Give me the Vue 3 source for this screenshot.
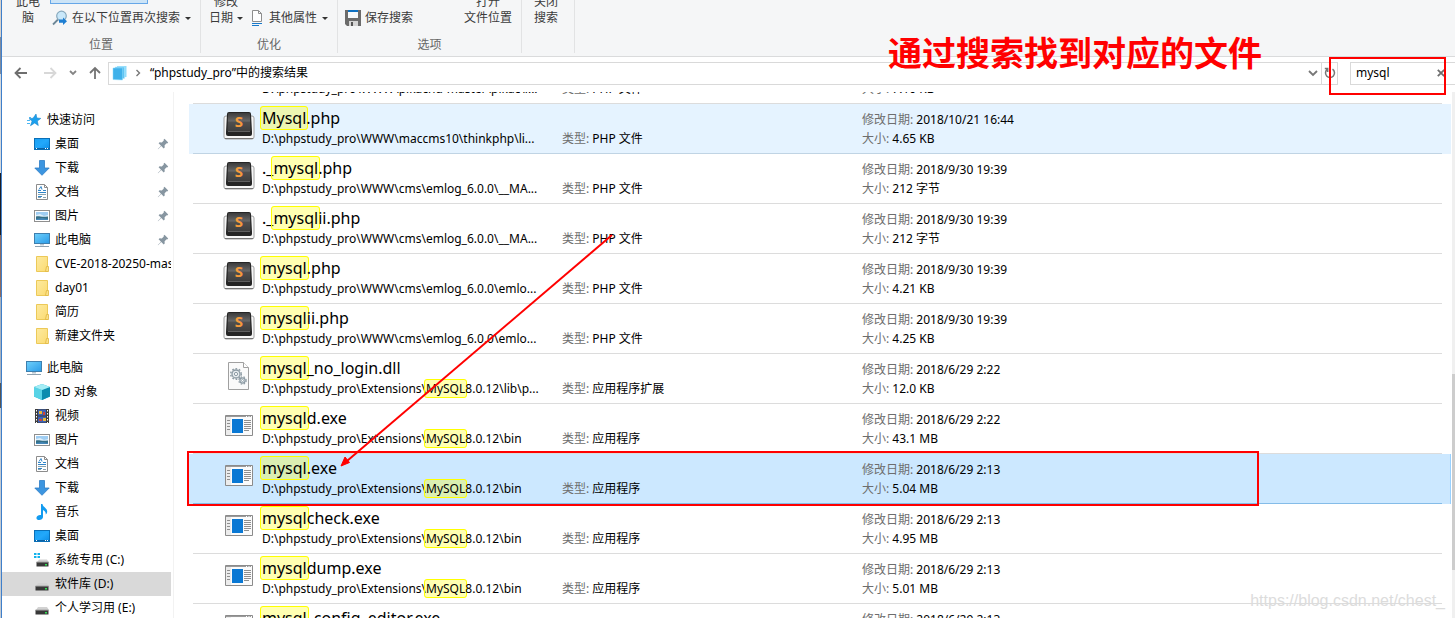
<script setup>
import { ref } from 'vue'

const query = ref('mysql')

const quick = [
  { icon: 'desktop', name: '桌面', pin: true },
  { icon: 'download', name: '下载', pin: true },
  { icon: 'doc', name: '文档', pin: true },
  { icon: 'picture', name: '图片', pin: true },
  { icon: 'pc', name: '此电脑', pin: true },
  { icon: 'folder', name: 'CVE-2018-20250-master' },
  { icon: 'folder', name: 'day01' },
  { icon: 'folder', name: '简历' },
  { icon: 'folder', name: '新建文件夹' },
]
const devices = [
  { icon: 'cube', name: '3D 对象' },
  { icon: 'video', name: '视频' },
  { icon: 'picture', name: '图片' },
  { icon: 'doc', name: '文档' },
  { icon: 'download', name: '下载' },
  { icon: 'music', name: '音乐' },
  { icon: 'desktop', name: '桌面' },
  { icon: 'sysdrive', name: '系统专用 (C:)' },
  { icon: 'drive', name: '软件库 (D:)', active: true },
  { icon: 'drive', name: '个人学习用 (E:)' },
]
const trees = [
  { icon: 'star', name: '快速访问', items: quick },
  { icon: 'pc', name: '此电脑', items: devices },
]

const bin = 'D:\\phpstudy_pro\\Extensions\\MySQL8.0.12\\bin'
const files = [
  { icon: 'sublime', name: 'mysql.php', path: 'D:\\phpstudy_pro\\WWW\\pikachu-master\\pikac\\l...', type: 'PHP 文件', date: '2018/11/2 10:12', size: '7.10 KB' },
  { icon: 'sublime', name: 'Mysql.php', path: 'D:\\phpstudy_pro\\WWW\\maccms10\\thinkphp\\li...', type: 'PHP 文件', date: '2018/10/21 16:44', size: '4.65 KB', state: 'hover' },
  { icon: 'sublime', name: '._mysql.php', path: 'D:\\phpstudy_pro\\WWW\\cms\\emlog_6.0.0\\__MA...', type: 'PHP 文件', date: '2018/9/30 19:39', size: '212 字节' },
  { icon: 'sublime', name: '._mysqlii.php', path: 'D:\\phpstudy_pro\\WWW\\cms\\emlog_6.0.0\\__MA...', type: 'PHP 文件', date: '2018/9/30 19:39', size: '212 字节' },
  { icon: 'sublime', name: 'mysql.php', path: 'D:\\phpstudy_pro\\WWW\\cms\\emlog_6.0.0\\emlo...', type: 'PHP 文件', date: '2018/9/30 19:39', size: '4.21 KB' },
  { icon: 'sublime', name: 'mysqlii.php', path: 'D:\\phpstudy_pro\\WWW\\cms\\emlog_6.0.0\\emlo...', type: 'PHP 文件', date: '2018/9/30 19:39', size: '4.25 KB' },
  { icon: 'dll', name: 'mysql_no_login.dll', path: 'D:\\phpstudy_pro\\Extensions\\MySQL8.0.12\\lib\\p...', type: '应用程序扩展', date: '2018/6/29 2:22', size: '12.0 KB' },
  { icon: 'exe', name: 'mysqld.exe', path: bin, type: '应用程序', date: '2018/6/29 2:22', size: '43.1 MB' },
  { icon: 'exe', name: 'mysql.exe', path: bin, type: '应用程序', date: '2018/6/29 2:13', size: '5.04 MB', state: 'selected' },
  { icon: 'exe', name: 'mysqlcheck.exe', path: bin, type: '应用程序', date: '2018/6/29 2:13', size: '4.95 MB' },
  { icon: 'exe', name: 'mysqldump.exe', path: bin, type: '应用程序', date: '2018/6/29 2:13', size: '5.01 MB' },
  { icon: 'exe', name: 'mysql_config_editor.exe', path: bin, type: '应用程序', date: '2018/6/29 2:13', size: '4.83 MB' },
]

const parts = (s) => s.split(/(mysql)/i).filter(Boolean)
const isHit = (s) => s.toLowerCase() === 'mysql'
</script>

<template>
  <div class="window">
    <svg class="defs" aria-hidden="true">
      <defs>
        <linearGradient id="gBlue" x1="0" y1="0" x2="1" y2="1">
          <stop offset="0" stop-color="#1aa0f2" /><stop offset=".5" stop-color="#22a8fb" /><stop offset="1" stop-color="#0c8ce6" />
        </linearGradient>
        <linearGradient id="gScreen" x1="0" y1="0" x2="1" y2="1">
          <stop offset="0" stop-color="#6fd0fb" /><stop offset="1" stop-color="#2a9be8" />
        </linearGradient>
        <linearGradient id="gFolder" x1="0" y1="0" x2="1" y2="1">
          <stop offset="0" stop-color="#fdeaa0" /><stop offset="1" stop-color="#fbdb72" />
        </linearGradient>
        <linearGradient id="gKey" x1="0" y1="0" x2="0" y2="1">
          <stop offset="0" stop-color="#3c3c3c" /><stop offset=".45" stop-color="#686868" /><stop offset=".5" stop-color="#505050" /><stop offset="1" stop-color="#404040" />
        </linearGradient>
      </defs>
      <symbol id="star" viewBox="0 0 16 16">
        <path d="M10 2l.8 4 4 .4-3.500 2.600 1 4.500-3.600-2.500-4.200 2.700 1.600-4.600-3-2.400 4-.5z" fill="#1ba0ee" stroke="#1583c9" stroke-width=".6" />
        <path d="M1 8.500h3M1 11.500h3M3 5.500h2" stroke="#49b6f3" stroke-width="1" />
      </symbol>
      <symbol id="desktop" viewBox="0 0 16 16">
        <rect x=".5" y="2.500" width="15" height="11" fill="url(#gBlue)" stroke="#0a6fb7" />
        <path d="M1 12.500h14" stroke="#0b62a5" /><path d="M2 12.500h1M11 12.500h1M13 12.500h1" stroke="#fff" />
      </symbol>
      <symbol id="download" viewBox="0 0 16 16">
        <path d="M5.500 .5h5v7.500h4.700L8 15.300.8 8h4.700z" fill="#3c95e0" stroke="#2c7cc5" stroke-width=".8" />
      </symbol>
      <symbol id="doc" viewBox="0 0 16 16">
        <path d="M2.500 .5h8l3 3v12h-11z" fill="#fff" stroke="#8c8c8c" />
        <path d="M10.500 .5v3h3" fill="none" stroke="#8c8c8c" />
        <path d="M4 6.500h3M4 8.500h8M4 12.500h4M9 6.500h3" stroke="#3186c9" /><path d="M4 10.500h8M4 13.500h3M9 13.500h3" stroke="#8aa3ae" /><path d="M5 5.500l2-3 1 3" fill="none" stroke="#3186c9" />
      </symbol>
      <symbol id="picture" viewBox="0 0 16 16">
        <rect x=".5" y="2.500" width="15" height="11" fill="#fff" stroke="#8f8f8f" />
        <path d="M2 4h12v5H2z" fill="#9fcdf2" /><path d="M2 7l4-1 4 2 4-1v2H2z" fill="#dceefa" /><path d="M2 8.500c3-1 5 1 12 0V12H2z" fill="#356f86" /><path d="M2 11l6-1 6 1v1H2z" fill="#4587b8" />
      </symbol>
      <symbol id="pc" viewBox="0 0 16 16">
        <rect x=".5" y="1.500" width="15" height="10" fill="url(#gScreen)" stroke="#3e7fae" />
        <path d="M6 12h4v1.500H6z" fill="#b9c7d0" /><path d="M1 14.500h14" stroke="#8fa2b0" />
      </symbol>
      <symbol id="folder" viewBox="0 0 16 16">
        <path d="M2.500 .5h11v15h-11z" fill="url(#gFolder)" stroke="#ecc958" />
        <path d="M12.500 10.500h2v5h-3z" fill="#fbe18a" stroke="#e0b63f" stroke-width=".8" />
      </symbol>
      <symbol id="cube" viewBox="0 0 16 16">
        <path d="M8 0l8 3v9.500L8 16 0 12.500V3z" fill="#21b2cf" /><path d="M0 3l8 3v10l-8-3.500z" fill="#58d3e6" /><path d="M8 6l8-3v9.500L8 16z" fill="#0a8cae" /><path d="M8 0l8 3-8 3-8-3z" fill="#a4edf5" />
      </symbol>
      <symbol id="video" viewBox="0 0 16 16">
        <path d="M1 1h14v14H1z" fill="#3d3d3d" /><path d="M4 1.500h8v6H4zM4 8.500h8v6H4z" fill="#3c62b8" />
        <path d="M5 3h3v3H5zM9 10h3v3H9z" fill="#e8b839" /><path d="M9 4h2v3H9zM5 11h3v2H5z" fill="#c9463d" />
        <path d="M2.500 2v13M13.500 2v13" stroke="#fff" stroke-dasharray="1.500 1.500" />
      </symbol>
      <symbol id="music" viewBox="0 0 16 16">
        <path d="M7 0h1.500c.3 3 4.700 4 4.700 7.500 0 1.500-.8 2.500-1.500 3 .3-2.500-1-3.500-2.700-4.500V13c0 2-2 3-3.800 3-1.800 0-3-1-2.700-2.600C2.900 11.500 5 10.600 7 11z" fill="#129bf0" />
      </symbol>
      <symbol id="drive" viewBox="0 0 16 16">
        <path d="M4 7h9l2 3H2z" fill="#d2d2d2" /><path d="M1.500 10h13v4.500h-13z" fill="#383838" /><path d="M1.500 9.500h13v1h-13z" fill="#a8a8a8" /><path d="M11 12h2v1.500h-2z" fill="#30e052" />
      </symbol>
      <symbol id="sysdrive" viewBox="0 0 16 16">
        <path d="M5 7.500h8l2 3H3z" fill="#d2d2d2" /><path d="M2.500 10h12v4.500h-12z" fill="#383838" /><path d="M2.500 9.500h12v1h-12z" fill="#a8a8a8" /><path d="M11 12h2v1.500h-2z" fill="#30e052" />
        <path d="M0 1h2.500v2H0zM3.500 1H6v2H3.500zM0 4h2.500v2H0zM3.500 4H6v2H3.500z" fill="#12b2ec" />
      </symbol>
      <symbol id="pin" viewBox="0 0 12 12">
        <path d="M7.500 .8l3.700 3.700-1 .9-.6-.2-2 2 .1 2.200-1 1L4.300 8 1 11.200.8 11 4 7.700 1.600 5.300l1-1 2.200.1 2-2-.2-.6z" fill="#8796a1" />
      </symbol>
      <symbol id="sublime" viewBox="0 0 32 32">
        <path d="M3 6h26q2 0 2 2v19q0 2-2 2H3q-2 0-2-2V8q0-2 2-2z" fill="#f7f7f7" stroke="#a2a2a2" />
        <path d="M2 28.500h28" stroke="#777" />
        <path d="M3 22l1-18q0-2 2-2h20q2 0 2 2l1 18v2q0 2-2 2H5q-2 0-2-2z" fill="#252525" />
        <path d="M5 4q0-1 1-1h20q1 0 1 1l.5 17h-23z" fill="url(#gKey)" />
        <path d="M5 21.500h22" stroke="#7a7a7a" stroke-width=".7" />
        <text x="16" y="17" text-anchor="middle" font-family="Noto Sans, sans-serif" font-size="15" font-weight="700" fill="#f59a3c">S</text>
      </symbol>
      <symbol id="dll" viewBox="0 0 32 32">
        <path d="M5.500 2.500h15l5 5v22h-20z" fill="#fafafa" stroke="#a0a0a0" /><path d="M20.500 2.500v5h5" fill="#fff" stroke="#a0a0a0" />
        <circle cx="13" cy="14" r="4" fill="#e6ebee" stroke="#8c9aa3" stroke-width="1.300" /><circle cx="13" cy="14" r="5.300" fill="none" stroke="#8c9aa3" stroke-width="1.400" stroke-dasharray="1.700 1.700" /><circle cx="13" cy="14" r="1.600" fill="#fff" stroke="#8c9aa3" />
        <circle cx="19.500" cy="20.500" r="2.600" fill="#e6ebee" stroke="#8c9aa3" stroke-width="1.200" /><circle cx="19.500" cy="20.500" r="3.700" fill="none" stroke="#8c9aa3" stroke-width="1.200" stroke-dasharray="1.500 1.500" /><circle cx="19.500" cy="20.500" r="1" fill="#fff" stroke="#8c9aa3" stroke-width=".8" />
      </symbol>
      <symbol id="exe" viewBox="0 0 32 32">
        <path d="M2.500 5.500h27v20h-27z" fill="#fbfbfb" stroke="#8b8b8b" /><path d="M3 6h26v1H3z" fill="#9a9a9a" /><path d="M3 7h5v18H3z" fill="#ececec" />
        <path d="M23 6.500h1M25.500 6.500h1M28 6.500h1" stroke="#fff" />
        <path d="M9 9h11v14H9z" fill="#0a78d4" />
        <path d="M4 10.500h3M4 13.500h3M4 16.500h3M4 19.500h3M21 10.500h7M21 12.500h7M21 14.500h7M21 16.500h7M21 18.500h7M21 20.500h5" stroke="#8f8f8f" />
      </symbol>
    </svg>

    <div class="edge"></div>

    <header class="ribbon">
      <section class="group location">
        <div class="tools">
          <button class="tall">此电<br />脑</button>
          <div class="stack">
            <div class="picked"></div>
            <button class="tool">
              <svg viewBox="0 0 16 16" class="i16"><path d="M1 14.500l5-5" stroke="#6d8797" stroke-width="1.800" /><circle cx="9.500" cy="6" r="4.800" fill="#c9e8fa" stroke="#88a9bd" stroke-width="1.200" /><path d="M7 9.500h4V7.500l4 3.800-4 3.700v-2.200H7z" fill="#1f7fd2" /></svg>
              在以下位置再次搜索<i class="caret"></i>
            </button>
          </div>
        </div>
        <h2>位置</h2>
      </section>
      <section class="group refine">
        <div class="tools">
          <button class="tall">修改<br />日期<i class="caret"></i></button>
          <button class="tool">
            <svg viewBox="0 0 16 16" class="i16"><path d="M3.500 .5h6l3 3v8h-9z" fill="#fff" stroke="#8e8e8e" /><path d="M9.500 .5v3h3" fill="none" stroke="#8e8e8e" /><path d="M3 13.500h10M3 15.500h7" stroke="#1979ca" /></svg>
            其他属性<i class="caret"></i>
          </button>
        </div>
        <h2>优化</h2>
      </section>
      <section class="group options">
        <div class="tools">
          <button class="tool">
            <svg viewBox="0 0 16 16" class="i16"><path d="M0 0h16v16H2l-2-2z" fill="#6b6b6b" /><path d="M3 0h10v8H3z" fill="#f5f8fa" /><path d="M3 0h10v2H3z" fill="#0c6fc0" /><path d="M4 11h9v5H4z" fill="#d5d5d5" /><path d="M6 12h2v4H6z" fill="#555" /></svg>
            保存搜索
          </button>
          <button class="tall">打开<br />文件位置</button>
        </div>
        <h2>选项</h2>
      </section>
      <section class="group closing">
        <div class="tools"><button class="tall">关闭<br />搜索</button></div>
        <h2></h2>
      </section>
    </header>

    <nav class="address">
      <button class="nav" aria-label="后退"><svg viewBox="0 0 14 14"><path d="M13 7H2M6.500 2L1.500 7l5 5" fill="none" stroke="#6e6e6e" stroke-width="1.800" /></svg></button>
      <button class="nav" aria-label="前进"><svg viewBox="0 0 14 14"><path d="M1 7h11M7.500 2l5 5-5 5" fill="none" stroke="#d8d8d8" stroke-width="1.800" /></svg></button>
      <button class="nav small" aria-label="最近"><svg viewBox="0 0 14 14"><path d="M4 5l3 3 3-3" fill="none" stroke="#858585" stroke-width="1.800" /></svg></button>
      <button class="nav" aria-label="向上"><svg viewBox="0 0 14 14"><path d="M7 13V2M2 7l5-5 5 5" fill="none" stroke="#737373" stroke-width="1.800" /></svg></button>
      <div class="crumbs">
        <svg viewBox="0 0 16 16" class="i16"><path d="M5 1h9.500v11L5 13z" fill="#8fdcfb" /><path d="M3 2h9.500v11.500L3 14z" fill="#5fc4f3" stroke="#b9ebfd" stroke-width=".5" /><path d="M1 3h9.500v12L1 14.500z" fill="#3fb1ea" stroke="#8edafa" stroke-width=".5" /></svg>
        <svg viewBox="0 0 8 8" class="sep"><path d="M2.500 1l3 3-3 3" fill="none" stroke="#777" stroke-width="1.400" /></svg>
        <span class="crumb">“phpstudy_pro”中的搜索结果</span>
        <button class="drop" aria-label="展开"><svg viewBox="0 0 10 10"><path d="M1 3l4 4 4-4" fill="none" stroke="#777" stroke-width="1.800" /></svg></button>
        <button class="refresh" aria-label="刷新"><svg viewBox="0 0 12 12"><path d="M8.500 2.200A4.500 4.500 0 1 1 3.500 2.200M3.700 5V1.500H.8" fill="none" stroke="#777" stroke-width="1.500" /></svg></button>
      </div>
      <div class="search">
        <input v-model="query" aria-label="搜索" />
        <button aria-label="清除" @click="query = ''"><svg viewBox="0 0 8 8"><path d="M.8 .8l6.400 6.400M7.200 .8L.8 7.200" stroke="#6e6e6e" stroke-width="1.800" /></svg></button>
      </div>
    </nav>

    <div class="body">
      <aside class="sidebar">
        <div v-for="t in trees" :key="t.name" class="tree">
          <a href="#" class="node root"><svg class="i16"><use :href="'#' + t.icon" /></svg><span>{{ t.name }}</span></a>
          <a v-for="n in t.items" :key="n.name" href="#" class="node" :class="{ active: n.active }">
            <svg class="i16"><use :href="'#' + n.icon" /></svg><span>{{ n.name }}</span>
            <svg v-if="n.pin" class="pin"><use href="#pin" /></svg>
          </a>
        </div>
      </aside>

      <main class="results">
        <ul>
          <li v-for="(f, i) in files" :key="i" class="file" :class="f.state">
            <div class="line">
              <svg class="thumb"><use :href="'#' + f.icon" /></svg>
              <div class="title">
                <template v-for="(p, k) in parts(f.name)" :key="k"><mark v-if="isHit(p)">{{ p }}</mark><template v-else>{{ p }}</template></template>
              </div>
              <div class="path">
                <template v-for="(p, k) in parts(f.path)" :key="k"><mark v-if="isHit(p)">{{ p }}</mark><template v-else>{{ p }}</template></template>
              </div>
              <div class="type"><span>类型:</span> {{ f.type }}</div>
              <div class="date"><span>修改日期:</span> {{ f.date }}</div>
              <div class="size"><span>大小:</span> {{ f.size }}</div>
            </div>
          </li>
        </ul>
      </main>
      <div class="scroll"><div class="thumbbar"></div></div>
    </div>

    <p class="note">通过搜索找到对应的文件</p>
    <div class="frame frame-search"></div>
    <div class="frame frame-row"></div>
    <svg class="arrow" viewBox="0 0 280 240" width="280" height="240"><path d="M275 5L10 231" stroke="#f00" stroke-width="2" /><path d="M4 236l4-9 4.500 5.500z" fill="#f00" stroke="#f00" /></svg>
    <p class="watermark">https://blog.csdn.net/chest_</p>
  </div>
</template>

<style>
body { margin: 0; }
</style>

<style scoped>
.window {
  position: relative;
  display: flex;
  flex-direction: column;
  height: 100vh;
  padding-left: 2px;
  box-sizing: border-box;
  overflow: hidden;
  background: #fff;
  color: #000;
  font: 12px/16px "Noto Sans", "Noto Sans CJK SC", sans-serif;
}
.defs { position: absolute; width: 0; height: 0; }
button { border: 0; padding: 0; background: none; font: inherit; color: inherit; }
h2, p, ul { margin: 0; padding: 0; font: inherit; list-style: none; }
a { color: inherit; text-decoration: none; }
.i16 { width: 16px; height: 16px; flex: none; }
.edge {
  position: absolute; left: 0; top: 0; bottom: 0; width: 1px;
  border-right: 1px solid #3f7fca;
  background: linear-gradient(#d8d2cc 0 6%, #7d8ba0 6% 12%, #d5d9dd 12% 28%, #1d1d22 28% 38%, #8d6a60 38% 48%, #a8b2bf 48% 62%, #555 62% 66%, #c3cad2 66%);
}

.ribbon {
  flex: none; display: flex; height: 56px;
  background: #f5f6f7; border-bottom: 1px solid #dadbdc; color: #3b3b3b;
}
.group {
  display: flex; flex-direction: column; justify-content: flex-end; gap: 11px;
  height: 53px; box-sizing: border-box; border-right: 1px solid #e2e3e4;
}
.group h2 { flex: none; height: 16px; text-align: center; color: #666; }
.tools { flex: none; display: flex; align-items: flex-end; }
.tall { text-align: center; white-space: nowrap; }
.tool { display: flex; align-items: center; white-space: nowrap; gap: 4px; }
.caret {
  display: inline-block; margin-left: 4px; vertical-align: middle;
  border: 3px solid transparent; border-top-color: #333; border-bottom-width: 0;
}
.tool .caret { margin-left: 1px; }
.location { width: 199px; }
.location .tools { padding-left: 14px; gap: 10px; }
.stack { display: flex; flex-direction: column; gap: 6px; }
.stack .tool { padding-left: 2px; }
.picked { width: 96px; height: 16px; border: 1px solid #66a7e8; background: #cce4f7; }
.refine { width: 137px; }
.refine .tools { padding-left: 8px; gap: 6px; }
.options { width: 184px; }
.options .tools { justify-content: space-between; padding: 0 9px 0 7px; }
.closing { width: 53px; }
.closing .tools { padding-left: 12px; }

.address { flex: none; display: flex; align-items: center; height: 32px; padding-bottom: 3px; }
.nav { display: flex; justify-content: center; width: 28px; }
.nav svg { width: 14px; height: 14px; }
.nav:first-child { width: 36px; padding-left: 2px; }
.nav:nth-child(2) { width: 24px; }
.nav.small { width: 22px; }
.nav:nth-child(4) { width: 22px; }
.crumbs {
  flex: 1; display: flex; align-items: center; height: 21px; margin-left: 2px;
  border: 1px solid #d9d9d9; padding-left: 3px;
}
.sep { width: 8px; height: 8px; margin: 0 8px 0 6px; }
.crumb { flex: 1; }
.drop, .refresh { display: flex; align-items: center; justify-content: center; height: 21px; width: 16px; }
.refresh { border-left: 1px solid #d9d9d9; }
.drop svg { width: 10px; height: 10px; }
.refresh svg { width: 12px; height: 12px; }
.search {
  display: flex; align-items: center; width: 104px; height: 21px; margin-left: 12px;
  border: 1px solid #d9d9d9; border-right: 0;
}
.search input { flex: 1; min-width: 0; border: 0; outline: 0; padding: 0 0 0 5px; font: inherit; background: none; }
.search button { display: flex; padding-right: 10px; }
.search svg { width: 8px; height: 8px; }

.body { flex: 1; display: flex; min-height: 0; }
.sidebar {
  flex: none; width: 172px; box-sizing: border-box; padding: 16px 2px 0 0;
  border-right: 1px solid #f2f2f2; overflow: hidden;
}
.tree { margin-bottom: 8px; }
.node { display: flex; align-items: center; gap: 5px; height: 24px; padding-left: 32px; overflow: hidden; }
.node.root { padding-left: 24px; }
.node span { flex: 1; min-width: 0; overflow: hidden; white-space: nowrap; }
.node.active { background: #d9d9d9; }
.pin { width: 12px; height: 12px; flex: none; margin-right: 2px; }

.results { flex: 1; min-width: 0; overflow: hidden; padding: 0 1px 0 15px; }
.results ul { margin-top: -38px; }
.file { padding: 0 8px 0 4px; border-right: 1px solid transparent; }
.line {
  display: grid; height: 49px; border-bottom: 1px solid #dcdcdc;
  grid-template: 5px 20px 19px / 69px 300px 300px 1fr;
  align-items: center;
  white-space: nowrap;
}
.file.hover { background: #e5f3ff; }
.file.hover .line { border-color: #c0d4e4; }
.file.selected { background: #cce8ff; border-color: #99d1ff; }
.file.selected .line { border-color: #84bce8; }
.thumb { grid-area: 1 / 1 / 4 / 2; width: 32px; height: 32px; margin-left: 30px; align-self: start; padding-top: 6px; }
.title { grid-area: 1 / 2 / 3 / 4; font-size: 16px; line-height: 20px; align-self: end; padding-bottom: 1px; }
.path { grid-area: 3 / 2; }
.type { grid-area: 3 / 3; }
.date { grid-area: 2 / 4; align-self: end; padding-bottom: 1px; }
.size { grid-area: 3 / 4; }
.type span, .date span, .size span { color: #6d6d6d; }
mark {
  margin: 0 -2px; padding: 0 1px; border: 1px solid #ff0; border-radius: 3px;
  background: rgba(255, 255, 0, 0.3); color: inherit;
}
.title mark { padding: 0 1px; }
.scroll { flex: none; width: 3px; background: #f0f0f0; display: flex; flex-direction: column; }
.scroll::before { content: ""; flex: 282; }
.scroll::after { content: ""; flex: 48; }
.thumbbar { flex: 196; background: #cdcdcd; }

.note {
  position: absolute; left: 888px; top: 31px; white-space: nowrap;
  font: 700 34px/42px "Noto Sans CJK SC", sans-serif; color: #f00;
}
.frame { position: absolute; border: 2px solid #f00; box-sizing: border-box; }
.frame-search { right: 9px; top: 57px; width: 117px; height: 38px; }
.frame-row { left: 187px; top: 451px; width: 1072px; height: 55px; }
.arrow { position: absolute; left: 337px; top: 230px; }
.watermark {
  position: absolute; right: 10px; bottom: 7px;
  font: 16px/20px "Liberation Sans", sans-serif; color: #dcdcdc;
}
</style>
